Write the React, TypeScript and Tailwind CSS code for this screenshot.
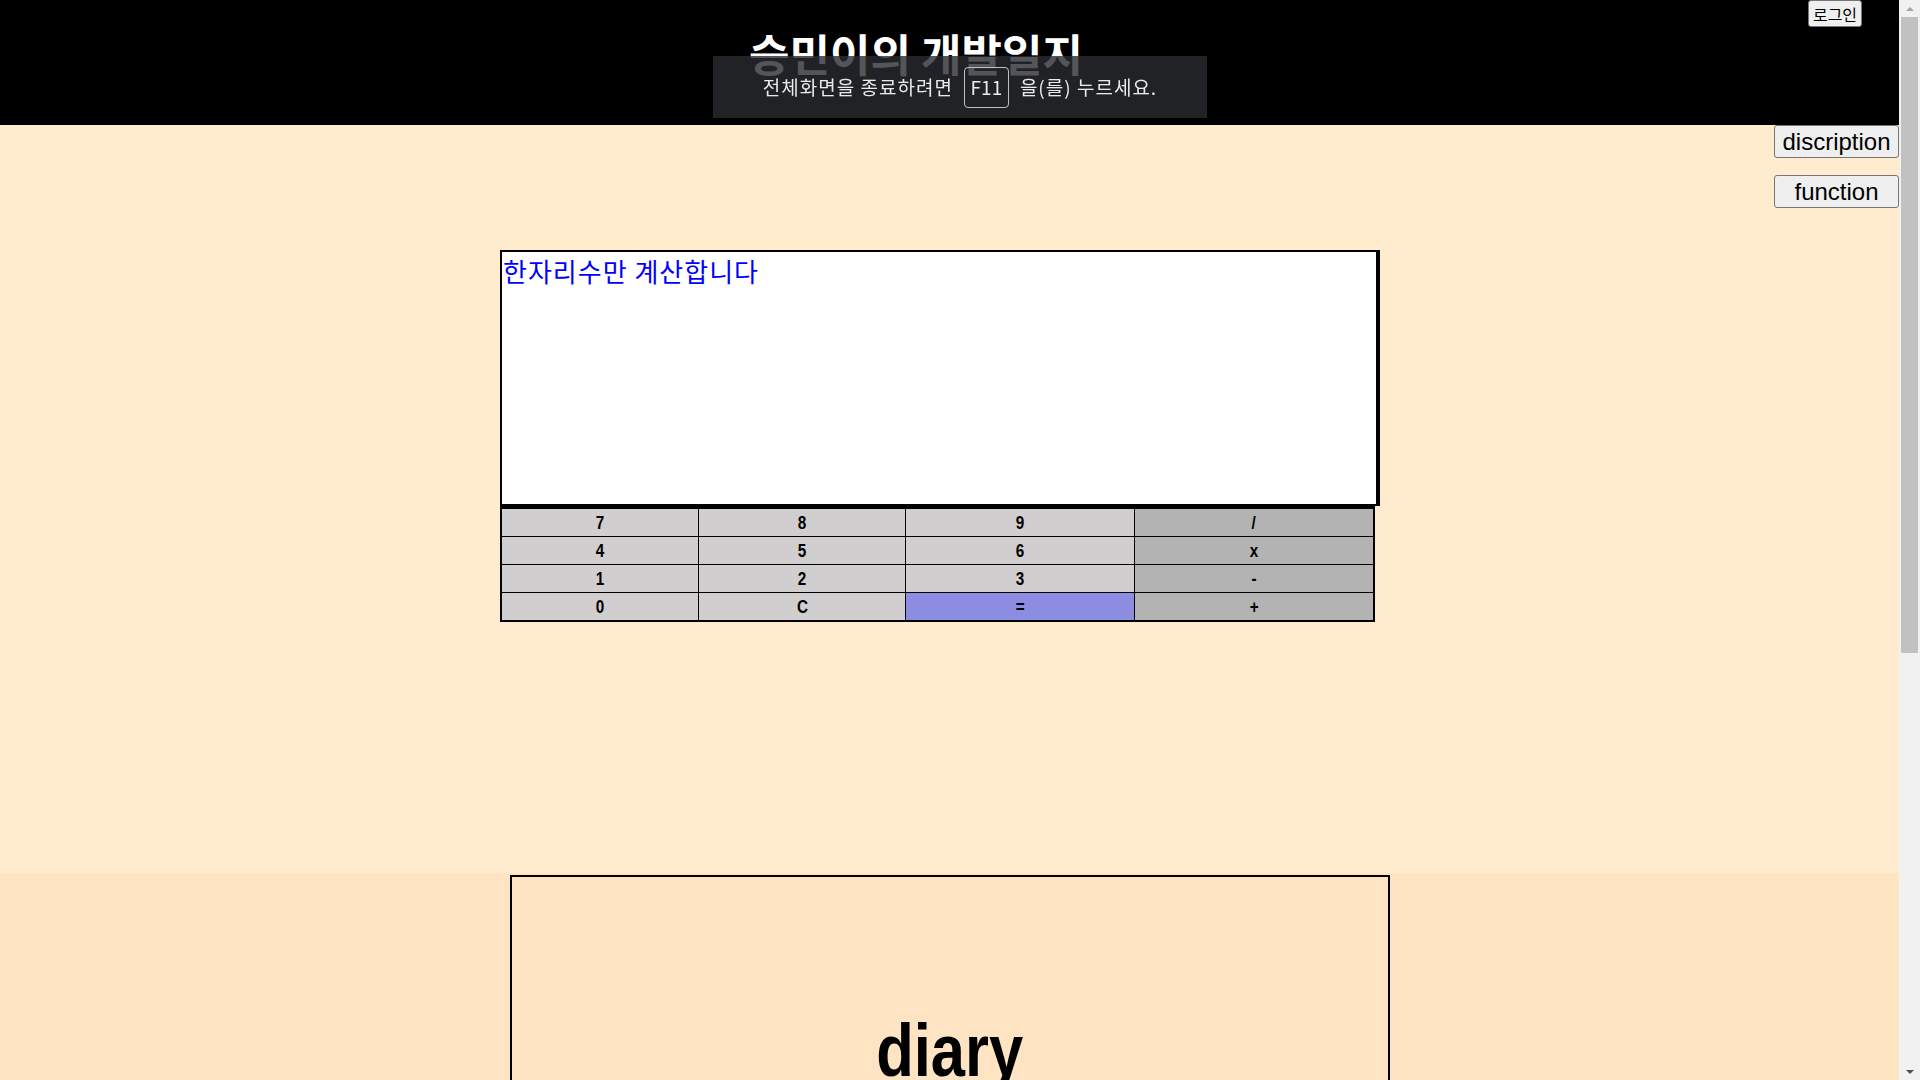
const keys = [
  { label: '7', kind: 'num' },
  { label: '8', kind: 'num' },
  { label: '9', kind: 'num' },
  { label: '/', kind: 'op' },
  { label: '4', kind: 'num' },
  { label: '5', kind: 'num' },
  { label: '6', kind: 'num' },
  { label: 'x', kind: 'op' },
  { label: '1', kind: 'num' },
  { label: '2', kind: 'num' },
  { label: '3', kind: 'num' },
  { label: '-', kind: 'op' },
  { label: '0', kind: 'num' },
  { label: 'C', kind: 'num' },
  { label: '=', kind: 'eq' },
  { label: '+', kind: 'op' },
];

const keyBg: Record<string, string> = {
  num: 'bg-[#d0cece]',
  op: 'bg-[#b3b3b3]',
  eq: 'bg-[#8c8ce3]',
};

const SideButton = ({ label }: { label: string }) => (
  <button className="w-[125px] h-[33px] bg-[#efefef] border border-[#767676] rounded-[3px] text-[24px] leading-none text-black font-['Liberation_Sans',sans-serif]">
    {label}
  </button>
);

const App = () => {
  return (
    <div className="h-screen overflow-hidden bg-[#ffebcd]">
      <div className="w-[1899px]">
        {/* Header */}
        <header className="h-[125px] bg-black flex items-start">
          <h1 className="flex-1 pl-[24px] pt-[31px] text-center text-white font-bold text-[44px] leading-none font-['Noto_Sans_CJK_KR',sans-serif]">
            승민이의 개발일지
          </h1>
          <button className="mr-[37px] w-[54px] h-[27px] bg-[#efefef] border border-[#767676] rounded-[3px] text-[16px] leading-none text-black font-['Noto_Sans_CJK_KR',sans-serif]">
            로그인
          </button>
        </header>

        {/* Calculator section */}
        <section className="h-[748px] bg-[#ffebcd]">
          <div className="flex flex-col items-end gap-[17px]">
            <SideButton label="discription" />
            <SideButton label="function" />
          </div>

          <div className="ml-[500px] mt-[42px] w-[880px]">
            <div className="h-[256px] bg-white border-t-2 border-l-2 border-b-2 border-r-[4px] border-black px-px pt-[3px]">
              <p className="text-[26px] tracking-[1px] leading-tight text-[#0000ff] font-['Noto_Sans_CJK_KR',sans-serif]">
                한자리수만 계산합니다
              </p>
            </div>
            <div className="w-[875px] border-2 border-t-[3px] border-black bg-black grid grid-cols-[196px_206px_228px_238px] gap-px">
              {keys.map((k) => (
                <div
                  key={k.label}
                  className={`h-[27px] flex items-center justify-center ${keyBg[k.kind]}`}
                >
                  <span className="inline-block scale-x-[0.85] text-[18px] leading-none font-bold text-black font-['Liberation_Sans',sans-serif]">
                    {k.label}
                  </span>
                </div>
              ))}
            </div>
          </div>
        </section>

        {/* Diary section */}
        <section className="bg-[#ffe4c4] pt-[2px] h-[700px]">
          <div className="mx-auto w-[880px] h-[600px] border-2 border-black pt-[136px] text-center">
            <h2 className="inline-block scale-x-[0.82] text-[75px] leading-none font-bold text-black font-['Liberation_Sans',sans-serif]">
              diary
            </h2>
          </div>
        </section>
      </div>

      {/* Fullscreen notice */}
      <div className="fixed top-[56px] left-1/2 -translate-x-1/2 w-[494px] h-[62px] bg-[rgba(40,42,46,0.8)] flex items-center justify-center gap-[11px] text-[19px] tracking-[1px] text-[#e8eaed] font-['Noto_Sans_CJK_KR',sans-serif]">
        <span>전체화면을 종료하려면</span>
        <span className="w-[45px] h-[41px] border border-[#bdc1c6] rounded-[4px] flex items-center justify-center tracking-normal">F11</span>
        <span>을(를) 누르세요.</span>
      </div>

      {/* Scrollbar */}
      <div className="fixed top-0 right-0 w-[21px] h-screen bg-[#f1f1f1]">
        <div className="h-[17px] flex items-center justify-center">
          <div className="w-0 h-0 border-l-[4px] border-r-[4px] border-b-[4px] border-l-transparent border-r-transparent border-b-[#a3a3a3]" />
        </div>
        <div className="mx-[2px] h-[636px] bg-[#c1c1c1]" />
        <div className="absolute bottom-0 left-0 w-full h-[17px] flex items-center justify-center">
          <div className="w-0 h-0 border-l-[4px] border-r-[4px] border-t-[4px] border-l-transparent border-r-transparent border-t-[#505050]" />
        </div>
      </div>
    </div>
  );
};

export default App;
